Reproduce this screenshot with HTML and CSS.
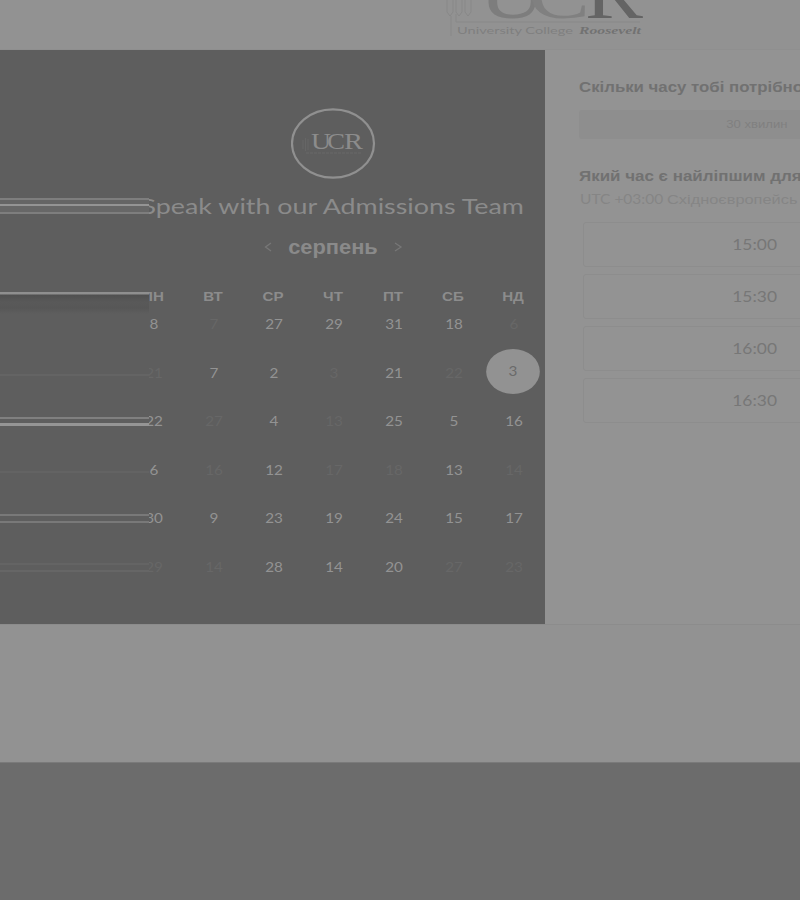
FILE: index.html
```
<!DOCTYPE html>
<html lang="uk">
<head>
<meta charset="utf-8">
<title>Speak with our Admissions Team</title>
<link rel="stylesheet" href="styles.css">
</head>
<body>
<header class="top">
  <svg class="brand" width="210" height="50" viewBox="0 0 210 50">
    <g fill="none" stroke="#888" stroke-width="1">
      <path d="M7 0v12l3 4 3-4V0M16 0v12l3 4 3-4V0M25 0v12l3 4 3-4V0M11 16v20M16 14v8h184"/>
    </g>
    <g font-family="Liberation Serif" font-size="70">
      <text x="39" y="17.500" textLength="66" lengthAdjust="spacingAndGlyphs" fill="#7d7d7d">U</text>
      <text x="88" y="17.500" textLength="62" lengthAdjust="spacingAndGlyphs" fill="#808080">C</text>
      <text x="145" y="17.500" textLength="58" lengthAdjust="spacingAndGlyphs" fill="#646464">R</text>
    </g>
    <text x="17" y="33.500" font-family="Lato" font-size="10" textLength="116" lengthAdjust="spacingAndGlyphs" fill="#7f7f7f">University College</text>
    <text x="139" y="33.500" font-family="Liberation Serif" font-size="11" font-weight="bold" font-style="italic" textLength="62" lengthAdjust="spacingAndGlyphs" fill="#727272">Roosevelt</text>
  </svg>
</header>
<main class="card">
  <section class="booking">
    <svg class="badge" width="86" height="72" viewBox="0 0 86 72">
      <ellipse cx="42" cy="35.500" rx="41" ry="34.200" fill="none" stroke="#909090" stroke-width="2.200"/>
      <path d="M12 32v9M14.500 30v13M17 31v11" stroke="#666" fill="none"/>
      <g font-family="Liberation Serif" font-size="24" fill="#8c8c8c">
        <text x="20" y="41" textLength="20" lengthAdjust="spacingAndGlyphs">U</text>
        <text x="36" y="41" textLength="18" lengthAdjust="spacingAndGlyphs">C</text>
        <text x="53" y="41" textLength="19" lengthAdjust="spacingAndGlyphs">R</text>
      </g>
      <path d="M15 45h56" stroke="#686868" stroke-dasharray="3 1" fill="none"/>
    </svg>
    <h1 class="title"><span>Speak with our Admissions Team</span></h1>
    <div class="month">
      <svg width="9" height="10" viewBox="0 0 9 10"><path d="M7 1L1.500 5 7 9"/></svg>
      <h2><span>серпень</span></h2>
      <svg width="9" height="10" viewBox="0 0 9 10"><path d="M1 1l6 4-6 4"/></svg>
    </div>
    <div class="week"><b>Пн</b><b>Вт</b><b>Ср</b><b>Чт</b><b>Пт</b><b>Сб</b><b>Нд</b></div>
    <div class="days">
      <i>8</i><i class="off">7</i><i>27</i><i>29</i><i>31</i><i>18</i><i class="off">6</i>
      <i class="off">21</i><i>7</i><i>2</i><i class="off">3</i><i>21</i><i class="off">22</i><i class="today">3</i>
      <i>22</i><i class="off">27</i><i>4</i><i class="off">13</i><i>25</i><i>5</i><i>16</i>
      <i>6</i><i class="off">16</i><i>12</i><i class="off">17</i><i class="off">18</i><i>13</i><i class="off">14</i>
      <i>30</i><i>9</i><i>23</i><i>19</i><i>24</i><i>15</i><i>17</i>
      <i class="off">29</i><i class="off">14</i><i>28</i><i>14</i><i>20</i><i class="off">27</i><i class="off">23</i>
    </div>
    <div class="streaks"></div>
  </section>
  <section class="times">
    <h3 class="q1"><span>Скільки часу тобі потрібно</span></h3>
    <div class="duration"><span>30 хвилин</span></div>
    <h3 class="q2"><span>Який час є найліпшим для</span></h3>
    <p class="zone"><span class="utc">UTC +03:00</span><span class="zname">Східноєвропейсь</span></p>
    <div class="slots">
      <div class="slot"><span>15:00</span></div>
      <div class="slot"><span>15:30</span></div>
      <div class="slot"><span>16:00</span></div>
      <div class="slot"><span>16:30</span></div>
    </div>
  </section>
</main>
<footer class="foot"></footer>
</body>
</html>
```
FILE: styles.css
```
* { box-sizing: border-box; }
body {
  margin: 0;
  width: 800px;
  height: 900px;
  overflow: hidden;
  background: #929292;
  font-family: Lato, "Liberation Sans", sans-serif;
  display: flex;
  flex-direction: column;
}
h1, h2, h3, p { margin: 0; font-weight: normal; white-space: nowrap; }
span { display: inline-block; }
.top { height: 50px; padding-left: 440px; border-bottom: 1px solid #8f8f8f; overflow: hidden; }
.brand { display: block; }
.card { display: flex; height: 575px; border-bottom: 1px solid #8c8c8c; overflow: hidden; }
.booking {
  position: relative;
  width: 545px;
  height: 574px;
  flex: none;
  padding: 58px 1px 0 124px;
  background: #5e5e5e;
  color: #939393;
  overflow: hidden;
}
.badge { display: block; margin: 0 auto; }
.title { height: 30px; margin-top: 11px; padding-right: 2px; font-size: 22px; line-height: 30px; text-align: center; color: #8b8b8b; }
.title span { transform: scaleX(1.22); }
.month { display: flex; justify-content: center; align-items: center; height: 30px; margin-top: 11px; padding-right: 2px; gap: 16px; }
.month svg { fill: none; stroke: #777; stroke-width: 1.3; }
.month h2 { width: 89px; font: bold 19.5px/30px "Liberation Sans", sans-serif; text-align: center; color: #8a8a8a; }
.month h2 span { transform: scaleX(1.12); }
.week, .days { display: grid; grid-template-columns: repeat(7, 60px); text-align: center; }
.week { margin-top: 25px; height: 20px; line-height: 20px; font-family: "Liberation Sans", sans-serif; font-size: 12px; text-transform: uppercase; color: #8c8c8c; margin-left: -1px; }
.week b { transform: scaleX(1.26); }
.days { grid-auto-rows: 48.6px; margin-top: -7px; }
.days i { font-style: normal; font-size: 12.5px; line-height: 49px; transform: scaleX(1.22); }
.days .off { color: #676767; }
.days .today {
  justify-self: center;
  align-self: center;
  width: 44px;
  height: 45px;
  margin: -2px 3px 0 0;
  border-radius: 50%;
  background: #929292;
  color: #6a6a6a;
  line-height: 45px;
}
.streaks {
  position: absolute;
  left: 0;
  top: 0;
  width: 149px;
  height: 574px;
  background: linear-gradient(
    #5e5e5e 148px, #7e7e7e 148px 150px, #656565 150px 154px,
    #949494 154px 156px, #676767 156px 162px, #7e7e7e 162px 164px,
    #5e5e5e 164px 242px, #8f8f8f 242px 244px, #505050 245px,
    #595959 252px, #575757 258px, #5e5e5e 264px 324px, #646464 324px 326px,
    #5e5e5e 326px 367px, #808080 367px 369px, #5e5e5e 369px 373px,
    #959595 373px 376px, #5e5e5e 376px 421px, #636363 421px 423px,
    #5e5e5e 423px 464px, #797979 464px 466px, #5e5e5e 466px 471px,
    #797979 471px 473px, #5e5e5e 473px 513px, #646464 513px 515px,
    #5e5e5e 515px 520px, #666 520px 522px, #5e5e5e 522px);
}
.times { width: 255px; flex: none; padding: 26px 0 0 34px; background: #939393; overflow: hidden; }
.times h3 { height: 22px; font: bold 15px/22px "Liberation Sans", sans-serif; color: #717171; }
.times h3 span { transform: scaleX(1.12); transform-origin: 0 50%; }
.times .q2 span { transform: scaleX(1.13); }
.duration { width: 356px; height: 29px; margin-top: 12px; border-radius: 3px; background: #8e8e8e; text-align: center; font: 11.5px/29px "Liberation Sans", sans-serif; color: #808080; }
.duration span { transform: scaleX(1.14); }
.q2 { margin-top: 26px; }
.zone { display: flex; height: 20px; line-height: 20px; margin-top: 3px; padding-left: 1px; color: #858585; font-size: 12.5px; }
.zone span { transform-origin: 0 50%; }
.utc { width: 87px; transform: scaleX(1.24); }
.zname { font-family: "Liberation Sans", sans-serif; transform: scaleX(1.31); }
.slots { display: flex; flex-direction: column; gap: 7px; width: 344px; margin: 12px 0 0 4px; }
.slot { height: 45px; border: 1px solid #8d8d8d; border-radius: 3px; text-align: center; font-size: 14.5px; line-height: 43px; color: #777; }
.slot span { transform: scaleX(1.2); }
.foot { margin-top: 137px; background: #6c6c6c; border-top: 1px solid #7a7a7a; flex: 1; }
```
